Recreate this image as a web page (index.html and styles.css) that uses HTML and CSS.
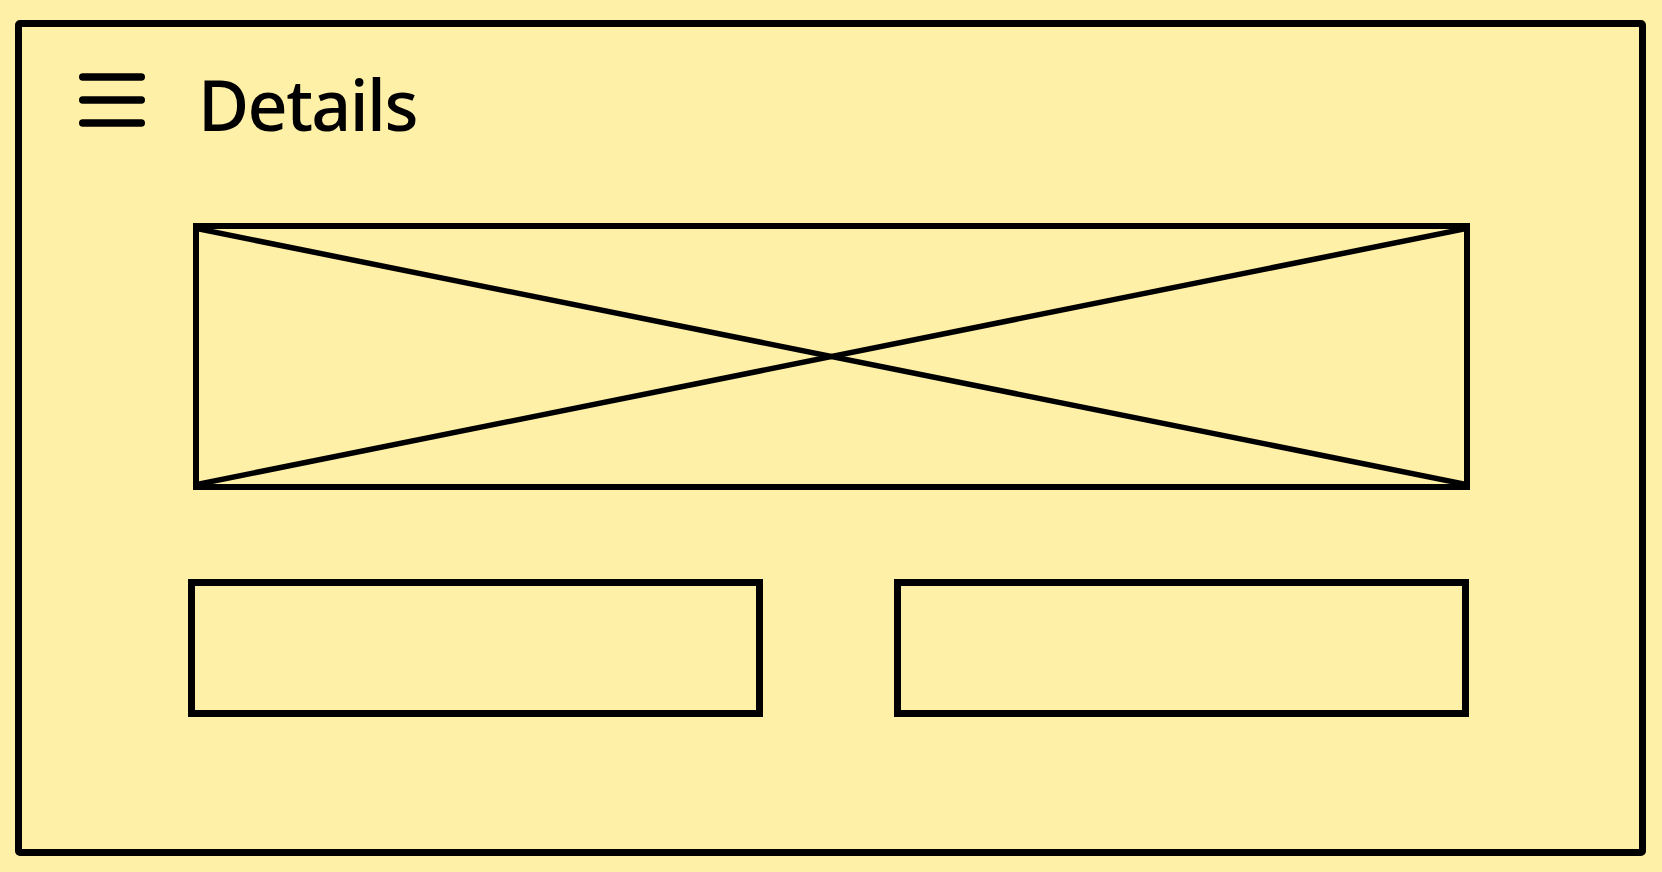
FILE: index.html
```html
<!DOCTYPE html>
<html lang="en">
<head>
<meta charset="utf-8">
<title>Details</title>
<link rel="stylesheet" href="styles.css">
</head>
<body>
<div class="frame">
  <header class="header">
    <svg class="menu-icon" width="66" height="56" viewBox="0 0 66 56" aria-hidden="true">
      <g stroke="#000" stroke-width="7.5" stroke-linecap="round">
        <line x1="3.75" y1="4" x2="62.25" y2="4"/>
        <line x1="3.75" y1="27" x2="62.25" y2="27"/>
        <line x1="3.75" y1="50" x2="62.25" y2="50"/>
      </g>
    </svg>
    <h1 class="title">Details</h1>
  </header>
  <div class="image-placeholder">
    <svg class="cross" width="1265" height="255" viewBox="0 0 1265 255" aria-hidden="true">
      <g stroke="#000" stroke-width="5.5">
        <line x1="0" y1="0" x2="1265" y2="255"/>
        <line x1="0" y1="255" x2="1265" y2="0"/>
      </g>
    </svg>
  </div>
  <div class="buttons">
    <div class="button"></div>
    <div class="button"></div>
  </div>
</div>
</body>
</html>
```
FILE: styles.css
```css
html, body {
  margin: 0;
  padding: 0;
  background: #fef0a7;
}

body {
  width: 1662px;
  height: 872px;
  padding: 20px 16px 16px 15px;
  box-sizing: border-box;
  font-family: "Noto Sans", "Open Sans", sans-serif;
  color: #000;
}

.frame {
  box-sizing: border-box;
  width: 1631px;
  height: 836px;
  border: 7px solid #000;
  border-radius: 5px;
  display: flex;
  flex-direction: column;
}

.header {
  display: flex;
  align-items: flex-start;
  padding: 46px 0 0 57px;
  height: 150px;
  box-sizing: border-box;
  flex: none;
}

.menu-icon {
  display: block;
  flex: none;
}

.title {
  margin: 0 0 0 53px;
  font-size: 70px;
  font-weight: 500;
  letter-spacing: -1.6px;
  line-height: 1;
  position: relative;
  top: -4px;
}

.image-placeholder {
  box-sizing: border-box;
  width: 1277px;
  height: 267px;
  margin: 46px 0 0 171px;
  border: 6px solid #000;
  flex: none;
}

.cross {
  display: block;
}

.buttons {
  display: flex;
  gap: 131px;
  margin: 89px 0 0 166px;
}

.button {
  box-sizing: border-box;
  width: 575px;
  height: 138px;
  border: 7px solid #000;
}
```
